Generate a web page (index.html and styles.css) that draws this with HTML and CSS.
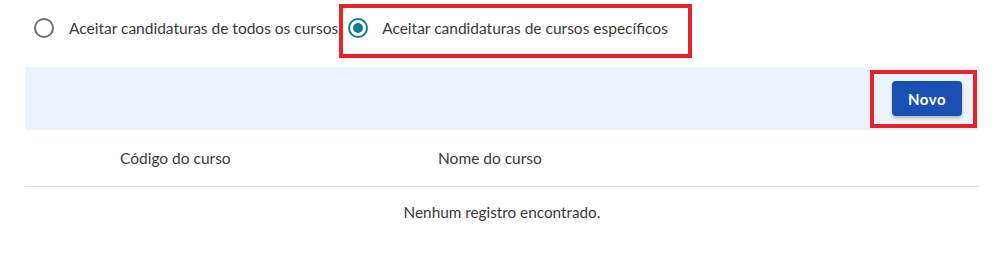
FILE: index.html
```html
<!DOCTYPE html>
<html lang="pt">
<head>
  <meta charset="UTF-8">
  <meta name="viewport" content="width=device-width, initial-scale=1.0">
  <title>Cursos aceitos</title>
  <link rel="stylesheet" href="styles.css">
</head>
<body>
  <div class="page">
    <div class="options">
      <label class="radio">
        <span class="radio-icon"></span>
        <span class="radio-text">Aceitar candidaturas de todos os cursos</span>
      </label>
      <label class="radio radio-checked">
        <span class="radio-icon"><span class="radio-dot"></span></span>
        <span class="radio-text">Aceitar candidaturas de cursos específicos</span>
      </label>
      <div class="mark mark-option"></div>
    </div>

    <div class="toolbar">
      <button type="button" class="btn-novo">Novo</button>
      <div class="mark mark-button"></div>
    </div>

    <div class="tabela">
      <div class="tabela-head">
        <div class="col-codigo">Código do curso</div>
        <div class="col-nome">Nome do curso</div>
      </div>
      <div class="tabela-vazia">Nenhum registro encontrado.</div>
    </div>
  </div>
</body>
</html>
```

FILE: styles.css
```css
* {
  margin: 0;
  padding: 0;
  box-sizing: border-box;
}

body {
  background-color: white;
  font-family: Lato, "Open Sans", sans-serif;
  color: #3a3a3a;
}

.page {
  padding: 0 18px 0 25px;
}

.options {
  position: relative;
  display: flex;
  align-items: center;
  height: 55px;
}

.radio {
  display: flex;
  align-items: center;
  font-size: 15.5px;
  cursor: pointer;
}

.radio:first-child {
  margin-left: 9px;
}

.radio-checked {
  margin-left: 10px;
}

.radio-icon {
  width: 20px;
  height: 20px;
  border: 2px solid #6e6e6e;
  border-radius: 50%;
  display: flex;
  align-items: center;
  justify-content: center;
  margin-right: 15px;
  flex-shrink: 0;
}

.radio-checked .radio-icon {
  border-color: #0a7d8f;
  margin-right: 14px;
}

.radio-dot {
  width: 10px;
  height: 10px;
  border-radius: 50%;
  background-color: #0a7d8f;
}

.mark {
  position: absolute;
  border: 4px solid #e3242b;
}

.mark-option {
  left: 314px;
  top: 4px;
  width: 353px;
  height: 54px;
}

.toolbar {
  position: relative;
  display: flex;
  justify-content: flex-end;
  align-items: center;
  height: 63px;
  margin-top: 12px;
  padding-right: 17px;
  background-color: #ebf4fd;
}

.btn-novo {
  width: 70px;
  height: 35px;
  border: none;
  border-radius: 4px;
  background-color: #1a4fb4;
  color: white;
  font-family: inherit;
  font-size: 15px;
  font-weight: bold;
  letter-spacing: 0.5px;
  box-shadow: 0 2px 3px rgba(0, 0, 0, 0.25);
  cursor: pointer;
}

.mark-button {
  right: 2px;
  top: 3px;
  width: 107px;
  height: 58px;
}

.tabela-head {
  display: flex;
  align-items: center;
  height: 57px;
  border-bottom: 1px solid #e2e2e2;
  font-size: 15.5px;
}

.col-codigo {
  width: 413px;
  padding-left: 95px;
}

.tabela-vazia {
  text-align: center;
  font-size: 15.3px;
  padding-top: 16px;
}
```
